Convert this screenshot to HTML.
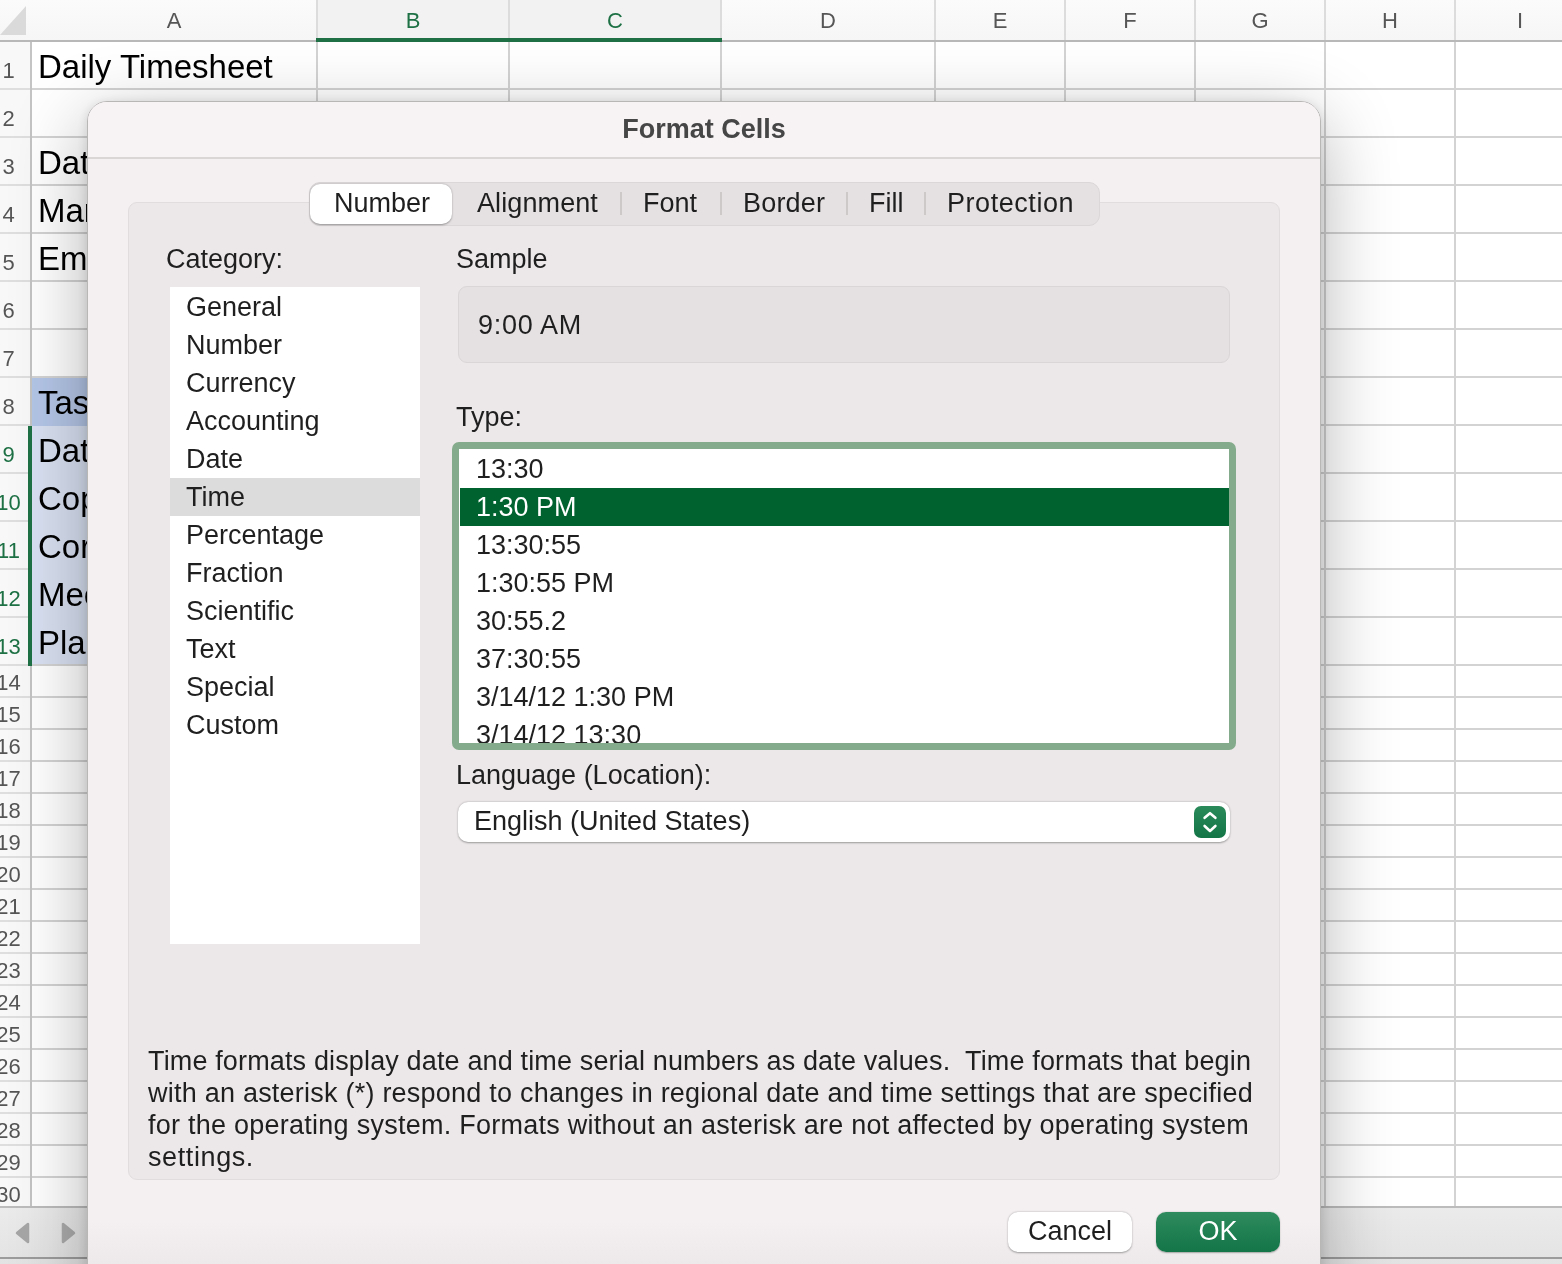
<!DOCTYPE html>
<html><head><meta charset="utf-8"><style>
*{box-sizing:border-box;margin:0;padding:0}
html,body{width:1562px;height:1264px;overflow:hidden;background:#fff;font-family:"Liberation Sans",sans-serif}
.abs{position:absolute}
.t{position:absolute;white-space:nowrap;line-height:1;-webkit-font-smoothing:antialiased;will-change:transform}
.d{font-size:27px;color:#1f1f1f}
</style></head>
<body>
<div class="abs" style="left:0;top:0;width:1562px;height:40px;background:linear-gradient(#fbfbfb,#f6f6f6)"></div>
<div class="abs" style="left:316px;top:0;width:406px;height:40px;background:#f2f2f2"></div>
<svg class="abs" style="left:0;top:0" width="30" height="40"><polygon points="0,35 26,6 26,35" fill="#dadada"/></svg>
<div class="abs" style="left:0;top:42px;width:30px;height:1166px;background:#f8f8f8"></div>
<div class="t" style="left:32px;width:284px;top:9.5px;text-align:center;font-size:22px;color:#565656">A</div>
<div class="t" style="left:318px;width:190px;top:9.5px;text-align:center;font-size:22px;color:#1e7145">B</div>
<div class="t" style="left:510px;width:210px;top:9.5px;text-align:center;font-size:22px;color:#1e7145">C</div>
<div class="t" style="left:722px;width:212px;top:9.5px;text-align:center;font-size:22px;color:#565656">D</div>
<div class="t" style="left:936px;width:128px;top:9.5px;text-align:center;font-size:22px;color:#565656">E</div>
<div class="t" style="left:1066px;width:128px;top:9.5px;text-align:center;font-size:22px;color:#565656">F</div>
<div class="t" style="left:1196px;width:128px;top:9.5px;text-align:center;font-size:22px;color:#565656">G</div>
<div class="t" style="left:1326px;width:128px;top:9.5px;text-align:center;font-size:22px;color:#565656">H</div>
<div class="t" style="left:1456px;width:128px;top:9.5px;text-align:center;font-size:22px;color:#565656">I</div>
<div class="abs" style="left:316px;top:0;width:2px;height:40px;background:#dcdcdc"></div>
<div class="abs" style="left:508px;top:0;width:2px;height:40px;background:#dcdcdc"></div>
<div class="abs" style="left:720px;top:0;width:2px;height:40px;background:#dcdcdc"></div>
<div class="abs" style="left:934px;top:0;width:2px;height:40px;background:#dcdcdc"></div>
<div class="abs" style="left:1064px;top:0;width:2px;height:40px;background:#dcdcdc"></div>
<div class="abs" style="left:1194px;top:0;width:2px;height:40px;background:#dcdcdc"></div>
<div class="abs" style="left:1324px;top:0;width:2px;height:40px;background:#dcdcdc"></div>
<div class="abs" style="left:1454px;top:0;width:2px;height:40px;background:#dcdcdc"></div>
<div class="abs" style="left:1584px;top:0;width:2px;height:40px;background:#dcdcdc"></div>
<div class="abs" style="left:0;top:40px;width:1562px;height:2px;background:#b8b8b8"></div>
<div class="abs" style="left:316px;top:38px;width:406px;height:4px;background:#1f7145"></div>
<div class="abs" style="left:32px;top:378px;width:284px;height:48px;background:#b4c6e7"></div>
<div class="abs" style="left:32px;top:426px;width:284px;height:240px;background:#d9e1f2"></div>
<div class="abs" style="left:0;top:88px;width:30px;height:2px;background:#dedede"></div>
<div class="abs" style="left:30px;top:88px;width:1600px;height:2px;background:#d3d3d3"></div>
<div class="abs" style="left:0;top:136px;width:30px;height:2px;background:#dedede"></div>
<div class="abs" style="left:30px;top:136px;width:1600px;height:2px;background:#d3d3d3"></div>
<div class="abs" style="left:0;top:184px;width:30px;height:2px;background:#dedede"></div>
<div class="abs" style="left:30px;top:184px;width:1600px;height:2px;background:#d3d3d3"></div>
<div class="abs" style="left:0;top:232px;width:30px;height:2px;background:#dedede"></div>
<div class="abs" style="left:30px;top:232px;width:1600px;height:2px;background:#d3d3d3"></div>
<div class="abs" style="left:0;top:280px;width:30px;height:2px;background:#dedede"></div>
<div class="abs" style="left:30px;top:280px;width:1600px;height:2px;background:#d3d3d3"></div>
<div class="abs" style="left:0;top:328px;width:30px;height:2px;background:#dedede"></div>
<div class="abs" style="left:30px;top:328px;width:1600px;height:2px;background:#d3d3d3"></div>
<div class="abs" style="left:0;top:376px;width:30px;height:2px;background:#dedede"></div>
<div class="abs" style="left:30px;top:376px;width:1600px;height:2px;background:#d3d3d3"></div>
<div class="abs" style="left:0;top:424px;width:30px;height:2px;background:#dedede"></div>
<div class="abs" style="left:316px;top:424px;width:1300px;height:2px;background:#d3d3d3"></div>
<div class="abs" style="left:0;top:472px;width:30px;height:2px;background:#dedede"></div>
<div class="abs" style="left:316px;top:472px;width:1300px;height:2px;background:#d3d3d3"></div>
<div class="abs" style="left:0;top:520px;width:30px;height:2px;background:#dedede"></div>
<div class="abs" style="left:316px;top:520px;width:1300px;height:2px;background:#d3d3d3"></div>
<div class="abs" style="left:0;top:568px;width:30px;height:2px;background:#dedede"></div>
<div class="abs" style="left:316px;top:568px;width:1300px;height:2px;background:#d3d3d3"></div>
<div class="abs" style="left:0;top:616px;width:30px;height:2px;background:#dedede"></div>
<div class="abs" style="left:316px;top:616px;width:1300px;height:2px;background:#d3d3d3"></div>
<div class="abs" style="left:0;top:664px;width:30px;height:2px;background:#dedede"></div>
<div class="abs" style="left:30px;top:664px;width:1600px;height:2px;background:#d3d3d3"></div>
<div class="abs" style="left:0;top:696px;width:30px;height:2px;background:#dedede"></div>
<div class="abs" style="left:30px;top:696px;width:1600px;height:2px;background:#d3d3d3"></div>
<div class="abs" style="left:0;top:728px;width:30px;height:2px;background:#dedede"></div>
<div class="abs" style="left:30px;top:728px;width:1600px;height:2px;background:#d3d3d3"></div>
<div class="abs" style="left:0;top:760px;width:30px;height:2px;background:#dedede"></div>
<div class="abs" style="left:30px;top:760px;width:1600px;height:2px;background:#d3d3d3"></div>
<div class="abs" style="left:0;top:792px;width:30px;height:2px;background:#dedede"></div>
<div class="abs" style="left:30px;top:792px;width:1600px;height:2px;background:#d3d3d3"></div>
<div class="abs" style="left:0;top:824px;width:30px;height:2px;background:#dedede"></div>
<div class="abs" style="left:30px;top:824px;width:1600px;height:2px;background:#d3d3d3"></div>
<div class="abs" style="left:0;top:856px;width:30px;height:2px;background:#dedede"></div>
<div class="abs" style="left:30px;top:856px;width:1600px;height:2px;background:#d3d3d3"></div>
<div class="abs" style="left:0;top:888px;width:30px;height:2px;background:#dedede"></div>
<div class="abs" style="left:30px;top:888px;width:1600px;height:2px;background:#d3d3d3"></div>
<div class="abs" style="left:0;top:920px;width:30px;height:2px;background:#dedede"></div>
<div class="abs" style="left:30px;top:920px;width:1600px;height:2px;background:#d3d3d3"></div>
<div class="abs" style="left:0;top:952px;width:30px;height:2px;background:#dedede"></div>
<div class="abs" style="left:30px;top:952px;width:1600px;height:2px;background:#d3d3d3"></div>
<div class="abs" style="left:0;top:984px;width:30px;height:2px;background:#dedede"></div>
<div class="abs" style="left:30px;top:984px;width:1600px;height:2px;background:#d3d3d3"></div>
<div class="abs" style="left:0;top:1016px;width:30px;height:2px;background:#dedede"></div>
<div class="abs" style="left:30px;top:1016px;width:1600px;height:2px;background:#d3d3d3"></div>
<div class="abs" style="left:0;top:1048px;width:30px;height:2px;background:#dedede"></div>
<div class="abs" style="left:30px;top:1048px;width:1600px;height:2px;background:#d3d3d3"></div>
<div class="abs" style="left:0;top:1080px;width:30px;height:2px;background:#dedede"></div>
<div class="abs" style="left:30px;top:1080px;width:1600px;height:2px;background:#d3d3d3"></div>
<div class="abs" style="left:0;top:1112px;width:30px;height:2px;background:#dedede"></div>
<div class="abs" style="left:30px;top:1112px;width:1600px;height:2px;background:#d3d3d3"></div>
<div class="abs" style="left:0;top:1144px;width:30px;height:2px;background:#dedede"></div>
<div class="abs" style="left:30px;top:1144px;width:1600px;height:2px;background:#d3d3d3"></div>
<div class="abs" style="left:0;top:1176px;width:30px;height:2px;background:#dedede"></div>
<div class="abs" style="left:30px;top:1176px;width:1600px;height:2px;background:#d3d3d3"></div>
<div class="abs" style="left:0;top:1208px;width:30px;height:2px;background:#dedede"></div>
<div class="abs" style="left:30px;top:1208px;width:1600px;height:2px;background:#d3d3d3"></div>
<div class="abs" style="left:30px;top:42px;width:2px;height:1166px;background:#c4c4c4"></div>
<div class="abs" style="left:316px;top:42px;width:2px;height:1166px;background:#d3d3d3"></div>
<div class="abs" style="left:508px;top:42px;width:2px;height:1166px;background:#d3d3d3"></div>
<div class="abs" style="left:720px;top:42px;width:2px;height:1166px;background:#d3d3d3"></div>
<div class="abs" style="left:934px;top:42px;width:2px;height:1166px;background:#d3d3d3"></div>
<div class="abs" style="left:1064px;top:42px;width:2px;height:1166px;background:#d3d3d3"></div>
<div class="abs" style="left:1194px;top:42px;width:2px;height:1166px;background:#d3d3d3"></div>
<div class="abs" style="left:1324px;top:42px;width:2px;height:1166px;background:#d3d3d3"></div>
<div class="abs" style="left:1454px;top:42px;width:2px;height:1166px;background:#d3d3d3"></div>
<div class="abs" style="left:1584px;top:42px;width:2px;height:1166px;background:#d3d3d3"></div>
<div class="abs" style="left:28px;top:426px;width:4px;height:240px;background:#1f7145"></div>
<div class="t" style="left:-12px;width:41px;top:60px;text-align:center;font-size:22px;color:#565656">1</div>
<div class="t" style="left:-12px;width:41px;top:108px;text-align:center;font-size:22px;color:#565656">2</div>
<div class="t" style="left:-12px;width:41px;top:156px;text-align:center;font-size:22px;color:#565656">3</div>
<div class="t" style="left:-12px;width:41px;top:204px;text-align:center;font-size:22px;color:#565656">4</div>
<div class="t" style="left:-12px;width:41px;top:252px;text-align:center;font-size:22px;color:#565656">5</div>
<div class="t" style="left:-12px;width:41px;top:300px;text-align:center;font-size:22px;color:#565656">6</div>
<div class="t" style="left:-12px;width:41px;top:348px;text-align:center;font-size:22px;color:#565656">7</div>
<div class="t" style="left:-12px;width:41px;top:396px;text-align:center;font-size:22px;color:#565656">8</div>
<div class="t" style="left:-12px;width:41px;top:444px;text-align:center;font-size:22px;color:#1e7145">9</div>
<div class="t" style="left:-12px;width:41px;top:492px;text-align:center;font-size:22px;color:#1e7145">10</div>
<div class="t" style="left:-12px;width:41px;top:540px;text-align:center;font-size:22px;color:#1e7145">11</div>
<div class="t" style="left:-12px;width:41px;top:588px;text-align:center;font-size:22px;color:#1e7145">12</div>
<div class="t" style="left:-12px;width:41px;top:636px;text-align:center;font-size:22px;color:#1e7145">13</div>
<div class="t" style="left:-12px;width:41px;top:672px;text-align:center;font-size:22px;color:#565656">14</div>
<div class="t" style="left:-12px;width:41px;top:704px;text-align:center;font-size:22px;color:#565656">15</div>
<div class="t" style="left:-12px;width:41px;top:736px;text-align:center;font-size:22px;color:#565656">16</div>
<div class="t" style="left:-12px;width:41px;top:768px;text-align:center;font-size:22px;color:#565656">17</div>
<div class="t" style="left:-12px;width:41px;top:800px;text-align:center;font-size:22px;color:#565656">18</div>
<div class="t" style="left:-12px;width:41px;top:832px;text-align:center;font-size:22px;color:#565656">19</div>
<div class="t" style="left:-12px;width:41px;top:864px;text-align:center;font-size:22px;color:#565656">20</div>
<div class="t" style="left:-12px;width:41px;top:896px;text-align:center;font-size:22px;color:#565656">21</div>
<div class="t" style="left:-12px;width:41px;top:928px;text-align:center;font-size:22px;color:#565656">22</div>
<div class="t" style="left:-12px;width:41px;top:960px;text-align:center;font-size:22px;color:#565656">23</div>
<div class="t" style="left:-12px;width:41px;top:992px;text-align:center;font-size:22px;color:#565656">24</div>
<div class="t" style="left:-12px;width:41px;top:1024px;text-align:center;font-size:22px;color:#565656">25</div>
<div class="t" style="left:-12px;width:41px;top:1056px;text-align:center;font-size:22px;color:#565656">26</div>
<div class="t" style="left:-12px;width:41px;top:1088px;text-align:center;font-size:22px;color:#565656">27</div>
<div class="t" style="left:-12px;width:41px;top:1120px;text-align:center;font-size:22px;color:#565656">28</div>
<div class="t" style="left:-12px;width:41px;top:1152px;text-align:center;font-size:22px;color:#565656">29</div>
<div class="t" style="left:-12px;width:41px;top:1184px;text-align:center;font-size:22px;color:#565656">30</div>
<div class="t" style="left:38px;top:50px;font-size:33px;color:#000">Daily Timesheet</div>
<div class="t" style="left:38px;top:146px;font-size:33px;color:#000">Date:</div>
<div class="t" style="left:38px;top:194px;font-size:33px;color:#000">Manager:</div>
<div class="t" style="left:38px;top:242px;font-size:33px;color:#000">Employee:</div>
<div class="t" style="left:38px;top:386px;font-size:33px;color:#000">Task</div>
<div class="t" style="left:38px;top:434px;font-size:33px;color:#000">Data entry</div>
<div class="t" style="left:38px;top:482px;font-size:33px;color:#000">Copy</div>
<div class="t" style="left:38px;top:530px;font-size:33px;color:#000">Correspondence</div>
<div class="t" style="left:38px;top:578px;font-size:33px;color:#000">Meeting</div>
<div class="t" style="left:38px;top:626px;font-size:33px;color:#000">Planning</div>
<div class="abs" style="left:0;top:1208px;width:1562px;height:56px;background:linear-gradient(#ebebeb,#e3e3e3)"></div>
<div class="abs" style="left:0;top:1206px;width:1562px;height:2px;background:#bcbcbc"></div>
<div class="abs" style="left:0;top:1257px;width:1562px;height:2px;background:#9c9c9c"></div>
<svg class="abs" style="left:0;top:1215px" width="90" height="40"><path d="M17,18 L28,9 L28,27 Z" fill="#a6a6a6" stroke="#a6a6a6" stroke-width="2.5" stroke-linejoin="round"/><path d="M74,18 L63,9 L63,27 Z" fill="#ababab" stroke="#ababab" stroke-width="2.5" stroke-linejoin="round"/></svg>
<div class="abs" style="left:87px;top:101px;width:1234px;height:1220px;border-radius:20px;background:linear-gradient(#f4f0f1 0,#f4f0f1 1120px,#ede9ea 1163px,#ede9ea 100%);border:1px solid #b9b6b6;box-shadow:0 20px 76px rgba(0,0,0,0.30),0 2px 12px rgba(0,0,0,0.13)"></div>
<div class="abs" style="left:88px;top:102px;width:1232px;height:56px;border-radius:19px 19px 0 0;background:#f7f3f4"></div>
<div class="abs" style="left:88px;top:157px;width:1232px;height:2px;background:#dad6d6"></div>
<div class="t" style="left:88px;width:1232px;text-align:center;top:116px;font-size:27px;font-weight:700;color:#464646">Format Cells</div>
<div class="abs" style="left:128px;top:202px;width:1152px;height:978px;border-radius:9px;background:#ece8e9;border:1px solid #e1dddE"></div>
<div class="abs" style="left:309px;top:182px;width:791px;height:44px;border-radius:11px;background:#e5e1e2;border:1px solid #dbd7d8"></div>
<div class="abs" style="left:310px;top:184px;width:142px;height:40px;border-radius:10px;background:#fff;box-shadow:0 0.5px 2px rgba(0,0,0,0.35)"></div>
<div class="abs" style="left:620px;top:192px;width:2px;height:23px;background:#cdc9c9"></div>
<div class="abs" style="left:720px;top:192px;width:2px;height:23px;background:#cdc9c9"></div>
<div class="abs" style="left:846px;top:192px;width:2px;height:23px;background:#cdc9c9"></div>
<div class="abs" style="left:924px;top:192px;width:2px;height:23px;background:#cdc9c9"></div>
<div class="t" style="left:334px;top:190px;font-size:27px;font-weight:400;color:#1f1f1f;letter-spacing:0px">Number</div>
<div class="t" style="left:477px;top:190px;font-size:27px;font-weight:400;color:#1f1f1f;letter-spacing:0.1px">Alignment</div>
<div class="t" style="left:643px;top:190px;font-size:27px;font-weight:400;color:#1f1f1f;letter-spacing:0px">Font</div>
<div class="t" style="left:743px;top:190px;font-size:27px;font-weight:400;color:#1f1f1f;letter-spacing:0.2px">Border</div>
<div class="t" style="left:869px;top:190px;font-size:27px;font-weight:400;color:#1f1f1f;letter-spacing:0px">Fill</div>
<div class="t" style="left:947px;top:190px;font-size:27px;font-weight:400;color:#1f1f1f;letter-spacing:0.55px">Protection</div>
<div class="t" style="left:166px;top:246px;font-size:27px;font-weight:400;color:#1f1f1f;">Category:</div>
<div class="abs" style="left:170px;top:287px;width:250px;height:657px;background:#fff"></div>
<div class="abs" style="left:170px;top:478px;width:250px;height:38px;background:#dcdcdc"></div>
<div class="t" style="left:186px;top:294px;font-size:27px;font-weight:400;color:#1f1f1f;">General</div>
<div class="t" style="left:186px;top:332px;font-size:27px;font-weight:400;color:#1f1f1f;">Number</div>
<div class="t" style="left:186px;top:370px;font-size:27px;font-weight:400;color:#1f1f1f;">Currency</div>
<div class="t" style="left:186px;top:408px;font-size:27px;font-weight:400;color:#1f1f1f;">Accounting</div>
<div class="t" style="left:186px;top:446px;font-size:27px;font-weight:400;color:#1f1f1f;">Date</div>
<div class="t" style="left:186px;top:484px;font-size:27px;font-weight:400;color:#1f1f1f;">Time</div>
<div class="t" style="left:186px;top:522px;font-size:27px;font-weight:400;color:#1f1f1f;">Percentage</div>
<div class="t" style="left:186px;top:560px;font-size:27px;font-weight:400;color:#1f1f1f;">Fraction</div>
<div class="t" style="left:186px;top:598px;font-size:27px;font-weight:400;color:#1f1f1f;">Scientific</div>
<div class="t" style="left:186px;top:636px;font-size:27px;font-weight:400;color:#1f1f1f;">Text</div>
<div class="t" style="left:186px;top:674px;font-size:27px;font-weight:400;color:#1f1f1f;">Special</div>
<div class="t" style="left:186px;top:712px;font-size:27px;font-weight:400;color:#1f1f1f;">Custom</div>
<div class="t" style="left:456px;top:246px;font-size:27px;font-weight:400;color:#1f1f1f;">Sample</div>
<div class="abs" style="left:458px;top:286px;width:772px;height:77px;border-radius:9px;background:#e5e1e2;border:1px solid #dad6d7"></div>
<div class="t" style="left:478px;top:312px;font-size:27px;font-weight:400;color:#1f1f1f;letter-spacing:0.7px">9:00 AM</div>
<div class="t" style="left:456px;top:404px;font-size:27px;font-weight:400;color:#1f1f1f;">Type:</div>
<div class="abs" style="left:452px;top:442px;width:784px;height:308px;border-radius:7px;background:#84ab8b"></div>
<div class="abs" style="left:459px;top:449px;width:770px;height:294px;background:#fff;overflow:hidden"><div class="abs" style="left:1px;top:39px;width:769px;height:38px;background:#00632f"></div><div class="t" style="left:17px;top:7px;font-size:27px;color:#1f1f1f">13:30</div><div class="t" style="left:17px;top:45px;font-size:27px;color:#fff">1:30 PM</div><div class="t" style="left:17px;top:83px;font-size:27px;color:#1f1f1f">13:30:55</div><div class="t" style="left:17px;top:121px;font-size:27px;color:#1f1f1f">1:30:55 PM</div><div class="t" style="left:17px;top:159px;font-size:27px;color:#1f1f1f">30:55.2</div><div class="t" style="left:17px;top:197px;font-size:27px;color:#1f1f1f">37:30:55</div><div class="t" style="left:17px;top:235px;font-size:27px;color:#1f1f1f">3/14/12 1:30 PM</div><div class="t" style="left:17px;top:273px;font-size:27px;color:#1f1f1f">3/14/12 13:30</div></div>
<div class="t" style="left:456px;top:762px;font-size:27px;font-weight:400;color:#1f1f1f;">Language (Location):</div>
<div class="abs" style="left:458px;top:802px;width:772px;height:40px;border-radius:10px;background:#fff;box-shadow:0 0.5px 2px rgba(0,0,0,0.35)"></div>
<div class="t" style="left:474px;top:808px;font-size:27px;font-weight:400;color:#1f1f1f;">English (United States)</div>
<div class="abs" style="left:1194px;top:806px;width:32px;height:32px;border-radius:7px;background:linear-gradient(#2a8a5a,#137446)"></div>
<svg class="abs" style="left:1194px;top:806px" width="32" height="32"><path d="M10.6,11.8 L16,7.2 L21.4,11.8 M10.6,20 L16,25 L21.4,20" fill="none" stroke="#fff" stroke-width="2.6" stroke-linecap="round" stroke-linejoin="round"/></svg>
<div class="t" style="left:148px;top:1048px;font-size:27px;font-weight:400;color:#1f1f1f;letter-spacing:0.145px">Time formats display date and time serial numbers as date values.&nbsp; Time formats that begin</div>
<div class="t" style="left:148px;top:1080px;font-size:27px;font-weight:400;color:#1f1f1f;letter-spacing:0.23px">with an asterisk (*) respond to changes in regional date and time settings that are specified</div>
<div class="t" style="left:148px;top:1112px;font-size:27px;font-weight:400;color:#1f1f1f;letter-spacing:0.25px">for the operating system. Formats without an asterisk are not affected by operating system</div>
<div class="t" style="left:148px;top:1144px;font-size:27px;font-weight:400;color:#1f1f1f;letter-spacing:0.6px">settings.</div>
<div class="abs" style="left:1008px;top:1212px;width:124px;height:40px;border-radius:10px;background:#fff;box-shadow:0 0.5px 2px rgba(0,0,0,0.35)"></div>
<div class="t" style="left:1008px;width:124px;text-align:center;top:1218px;font-size:27px;color:#1f1f1f">Cancel</div>
<div class="abs" style="left:1156px;top:1212px;width:124px;height:40px;border-radius:10px;background:linear-gradient(#2e8b5d,#137548);box-shadow:0 0.5px 1.5px rgba(0,0,0,0.3)"></div>
<div class="t" style="left:1156px;width:124px;text-align:center;top:1218px;font-size:27px;color:#fff">OK</div>
</body></html>
